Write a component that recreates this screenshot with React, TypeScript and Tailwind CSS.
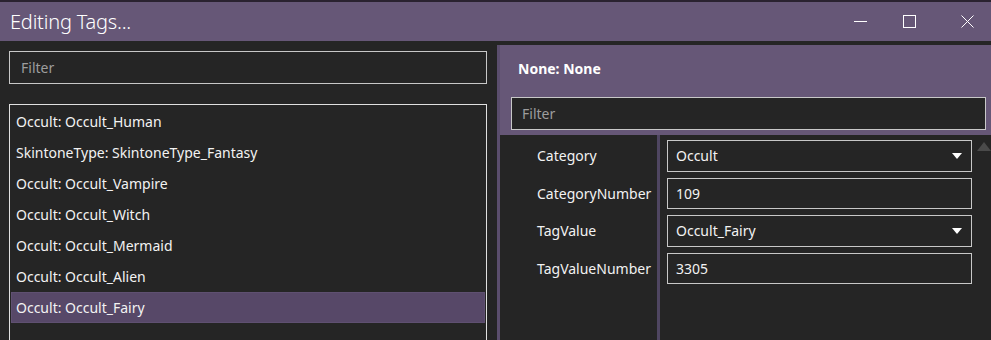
import React from "react";

const items = [
  "Occult: Occult_Human",
  "SkintoneType: SkintoneType_Fantasy",
  "Occult: Occult_Vampire",
  "Occult: Occult_Witch",
  "Occult: Occult_Mermaid",
  "Occult: Occult_Alien",
  "Occult: Occult_Fairy",
];

const props = [
  { label: "Category", value: "Occult", combo: true },
  { label: "CategoryNumber", value: "109", combo: false },
  { label: "TagValue", value: "Occult_Fairy", combo: true },
  { label: "TagValueNumber", value: "3305", combo: false },
];

function Caret() {
  return (
    <svg width="10" height="6" viewBox="0 0 10 6" className="ml-auto mr-[9px]">
      <path d="M0 0 H10 L5 6 Z" fill="#ffffff" />
    </svg>
  );
}

export default function App() {
  return (
    <div
      className="w-[991px] h-[340px] overflow-hidden flex flex-col bg-[#252525] text-[#f2f2f2] text-[14px]"
      style={{ fontFamily: '"Noto Sans", "Open Sans", sans-serif' }}
    >
      {/* strip of the window behind */}
      <div className="h-[2px] bg-[#2a2230]" />

      {/* Title bar */}
      <div className="h-[39px] bg-[#665777] flex items-center pl-[10px]">
        <span className="text-[20px] font-light text-white tracking-[-0.2px]">Editing Tags...</span>
        <div className="ml-auto flex items-center pr-[17px]">
          <svg width="14" height="13" viewBox="0 0 14 13" className="mr-[35px]">
            <path d="M0 6.5 H13" stroke="#fff" strokeWidth="1" />
          </svg>
          <svg width="13" height="13" viewBox="0 0 13 13" className="mr-[45px]">
            <rect x="0.5" y="0.5" width="12" height="12" fill="none" stroke="#fff" strokeWidth="1" />
          </svg>
          <svg width="13" height="13" viewBox="0 0 13 13">
            <path d="M0.5 0.5 L12.5 12.5 M12.5 0.5 L0.5 12.5" stroke="#fff" strokeWidth="1" />
          </svg>
        </div>
      </div>

      <div className="flex-1 flex min-h-0">
        {/* Left panel */}
        <div className="w-[497px] flex flex-col pt-[10px] pl-[9px] pr-[10px]">
          <div className="h-[33px] border border-[#c8c8c8] flex items-center pl-[11px] text-[#9d9d9d]">
            Filter
          </div>
          <div className="mt-[20px] flex-1 border-t border-l border-r border-[#e0e0e0] pt-[1px] px-[1px]">
            {items.map((t, i) => (
              <div
                key={t}
                className={
                  i === items.length - 1
                    ? "h-[31px] flex items-center pl-[4px] bg-[#574868] border border-[#5f5071]"
                    : "h-[31px] flex items-center pl-[4px] border border-transparent"
                }
              >
                {t}
              </div>
            ))}
          </div>
        </div>

        {/* Right panel */}
        <div className="flex-1 flex flex-col mt-[4px] border-l-[3px] border-[#5b4e6d]">
          <div className="h-[90px] bg-[#665777] flex flex-col pl-[11px] pr-[5px]">
            <div className="h-[52px] flex items-center pl-[7px] pb-[6px] font-bold text-white">None: None</div>
            <div className="h-[33px] bg-[#252525] border border-[#c8c8c8] flex items-center pl-[10px] text-[#9d9d9d]">
              Filter
            </div>
          </div>
          <div className="flex-1 flex">
            <div className="w-[157px] flex flex-col pt-[5px] pl-[37px]">
              {props.map((p) => (
                <div key={p.label} className="h-[37.5px] flex items-center pb-[6px]">
                  {p.label}
                </div>
              ))}
            </div>
            <div className="w-[3px] bg-[#4f4661]" />
            <div className="flex-1 flex flex-col pt-[5px] pl-[7px] pr-[19px] relative">
              {props.map((p) => (
                <div key={p.label} className="h-[37.5px] pb-[6px]">
                  <div className="h-full border border-[#c8c8c8] flex items-center pl-[8px]">
                    {p.value}
                    {p.combo && <Caret />}
                  </div>
                </div>
              ))}
              <svg width="14" height="9" viewBox="0 0 14 9" className="absolute right-0 top-[7px]">
                <path d="M0 9 L7 0 L14 9 Z" fill="#4a4a4a" />
              </svg>
            </div>
          </div>
        </div>
      </div>
    </div>
  );
}
